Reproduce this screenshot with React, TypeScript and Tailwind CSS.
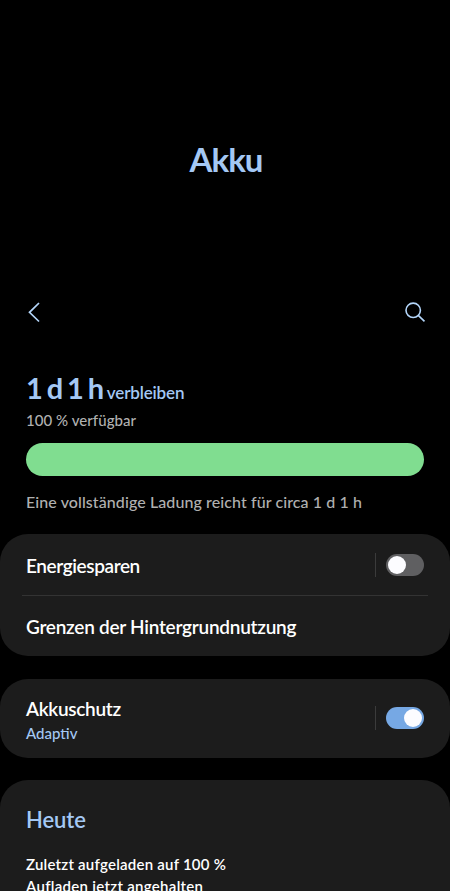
import clsx from 'clsx';

function Toggle({ on }: { on: boolean }) {
  return (
    <div className="flex items-center">
      <div className="h-6 w-px bg-[#3b3b3b]" />
      <button
        role="switch"
        aria-checked={on}
        className={clsx(
          'ml-[10px] flex h-[22px] w-[38px] items-center rounded-full px-[2px]',
          on ? 'justify-end bg-[#76a8e4]' : 'justify-start bg-[#5f5f61]'
        )}
      >
        <span className="size-[18px] rounded-full bg-[#fcfcff]" />
      </button>
    </div>
  );
}

export default function App() {
  return (
    <div className="flex h-[891px] w-[450px] flex-col overflow-hidden bg-black font-['Lato','Open_Sans',sans-serif] whitespace-nowrap text-white">
      <header className="h-[356px] shrink-0 text-[#a4c8f4]">
        <h1 className="pt-[139px] pl-[2px] text-center text-[33px] leading-10 font-bold tracking-[-0.9px]">Akku</h1>
        <div className="flex items-start justify-between pt-[122px] pr-[24px] pl-[27px]">
          <svg width="14" height="22" viewBox="0 0 14 22" fill="none" stroke="#b4d6fa" strokeWidth="1.7">
            <path d="M12 2 2.5 11.3 12 20.5" />
          </svg>
          <svg width="22" height="22" viewBox="0 0 22 22" fill="none" stroke="#b4d6fa" strokeWidth="1.6">
            <circle cx="9.2" cy="9.3" r="7.2" />
            <path d="m14.5 14.6 6 5.8" />
          </svg>
        </div>
      </header>

      <section className="h-[178px] shrink-0 px-[26px] pt-[13px]">
        <div className="flex h-[41px] items-baseline text-[#a4c8f4]">
          <span className="text-[29px] leading-[37px] font-bold tracking-[-2.2px] [word-spacing:1.2px]">1 d 1 h</span>
          <span className="ml-[5px] text-[17px] font-semibold tracking-[-0.15px]">verbleiben</span>
        </div>
        <p className="text-[15px] leading-5 font-medium tracking-[0.05px] text-[#b0b0b0]">100 % verfügbar</p>
        <div className="mt-[13px] h-[33px] rounded-full bg-[#80dd90]" />
        <p className="mt-[16px] text-[16px] leading-5 font-medium tracking-[0.09px] text-[#b0b0b0]">
          Eine vollständige Ladung reicht für circa 1 d 1 h
        </p>
      </section>

      <section className="h-[122px] shrink-0 rounded-[28px] bg-[#1c1c1c] px-[22px]">
        <div className="flex h-[62px] items-center justify-between border-b border-[#333] px-1">
          <span className="pt-[3px] text-[19px] font-semibold tracking-[-0.4px]">Energiesparen</span>
          <Toggle on={false} />
        </div>
        <div className="flex h-[60px] items-center px-1">
          <span className="pt-[3px] text-[19px] font-semibold tracking-[-0.26px]">Grenzen der Hintergrundnutzung</span>
        </div>
      </section>

      <section className="mt-[23px] flex h-[79px] shrink-0 items-center justify-between rounded-[28px] bg-[#1c1c1c] px-[26px]">
        <div className="pt-[3px]">
          <p className="text-[19px] leading-[26px] font-semibold tracking-[-0.3px]">Akkuschutz</p>
          <p className="text-[15px] leading-[22px] font-medium text-[#a4c8f4]">Adaptiv</p>
        </div>
        <div className="pb-[1px]">
          <Toggle on />
        </div>
      </section>

      <section className="mt-[22px] h-[160px] shrink-0 rounded-t-[28px] bg-[#1c1c1c] px-[26px] pt-[26px]">
        <h2 className="text-[22px] leading-7 font-semibold tracking-[-0.1px] text-[#a4c8f4]">Heute</h2>
        <p className="mt-[19px] text-[15px] leading-[22px] font-semibold tracking-[0.23px]">Zuletzt aufgeladen auf 100 %</p>
        <p className="text-[15px] leading-[22px] font-semibold tracking-[0.3px]">Aufladen jetzt angehalten</p>
      </section>
    </div>
  );
}
